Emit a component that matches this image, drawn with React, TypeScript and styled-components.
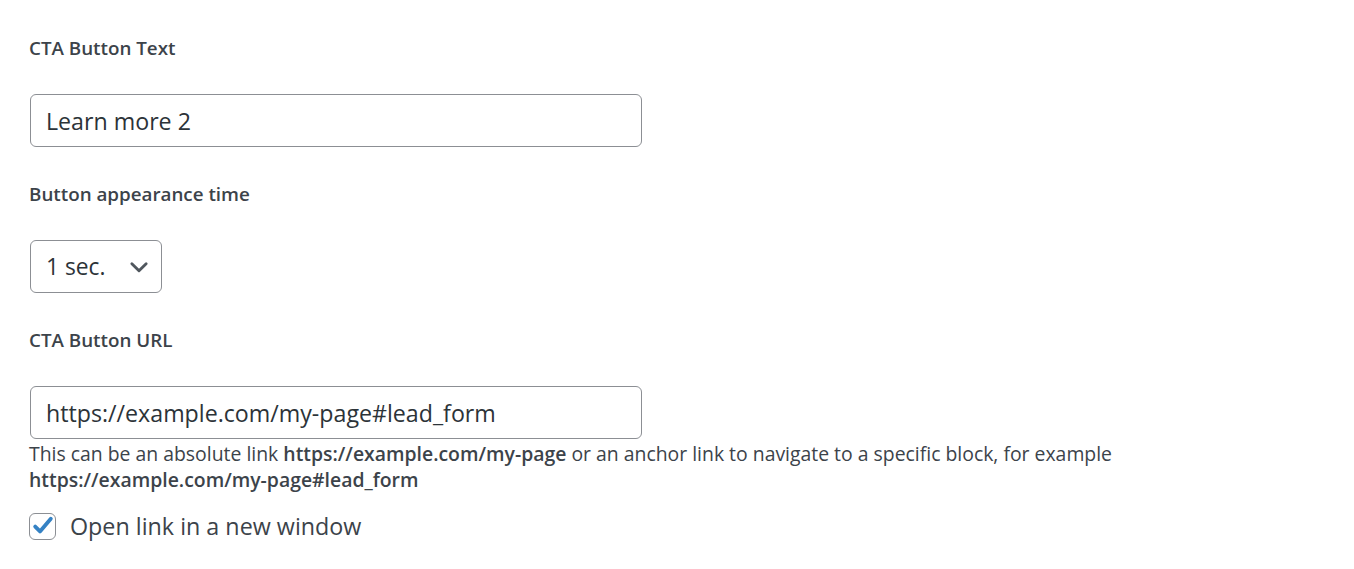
import styled, { createGlobalStyle } from "styled-components";
import { useState } from "react";

const GlobalStyle = createGlobalStyle`
  body {
    margin: 0;
    background: #ffffff;
    font-family: "Open Sans", "Noto Sans", sans-serif;
    color: #3c434a;
  }
`;

const Form = styled.div`
  display: flex;
  flex-direction: column;
  padding: 36px 0 0 29px;
`;

const Field = styled.div`
  display: flex;
  flex-direction: column;
  margin-bottom: 35px;
`;

const Label = styled.label`
  font-size: 18.8px;
  font-weight: 600;
  line-height: 24px;
  color: #3c434a;
  margin-bottom: 34px;
`;

const TextInput = styled.input<{ $h?: number }>`
  box-sizing: border-box;
  width: 612px;
  height: ${(p) => p.$h ?? 53}px;
  margin-left: 1px;
  padding: 0 15px;
  border: 1px solid #8c8f94;
  border-radius: 6px;
  font-family: inherit;
  font-size: 23.2px;
  color: #2c3338;
  background: #fff;
  outline: none;
`;

const SelectBox = styled.div`
  position: relative;
  width: 132px;
  height: 53px;
  margin-left: 1px;
`;

const Select = styled.select`
  box-sizing: border-box;
  width: 100%;
  height: 100%;
  padding: 0 40px 0 15px;
  border: 1px solid #8c8f94;
  border-radius: 6px;
  font-family: inherit;
  font-size: 22.8px;
  color: #2c3338;
  background: #fff;
  appearance: none;
  outline: none;
`;

const Chevron = styled.svg`
  position: absolute;
  right: 12px;
  top: 50%;
  transform: translateY(-50%);
  pointer-events: none;
`;

const Help = styled.p`
  margin: 2px 0 0 0;
  font-size: 19.4px;
  line-height: 26px;
  color: #3c434a;

  strong {
    font-weight: 600;
  }
`;

const CheckRow = styled.label`
  display: flex;
  align-items: center;
  gap: 14px;
  margin-top: 19px;
  font-size: 23.3px;
  line-height: 28px;
  color: #3c434a;
  cursor: pointer;
`;

const CheckBox = styled.span`
  box-sizing: border-box;
  width: 27px;
  height: 27px;
  border: 1px solid #8c8f94;
  border-radius: 6px;
  display: flex;
  align-items: center;
  justify-content: center;
  background: #fff;
`;

const App = () => {
  const [checked, setChecked] = useState(true);

  return (
    <>
      <GlobalStyle />
      <Form>
        <Field>
          <Label>CTA Button Text</Label>
          <TextInput defaultValue="Learn more 2" />
        </Field>
        <Field>
          <Label>Button appearance time</Label>
          <SelectBox>
            <Select defaultValue="1">
              <option value="1">1 sec.</option>
              <option value="2">2 sec.</option>
              <option value="3">3 sec.</option>
              <option value="5">5 sec.</option>
            </Select>
            <Chevron width="22" height="22" viewBox="0 0 20 20">
              <path
                d="M3.5 7l6.5 6.5L16.5 7"
                fill="none"
                stroke="#50575e"
                strokeWidth="2.6"
                strokeLinecap="round"
                strokeLinejoin="round"
              />
            </Chevron>
          </SelectBox>
        </Field>
        <Field>
          <Label>CTA Button URL</Label>
          <TextInput $h={53} defaultValue="https://example.com/my-page#lead_form" />
          <Help>
            This can be an absolute link <strong>https://example.com/my-page</strong> or an
            anchor link to navigate to a specific block, for example
            <br />
            <strong>https://example.com/my-page#lead_form</strong>
          </Help>
          <CheckRow onClick={() => setChecked(!checked)}>
            <CheckBox>
              {checked && (
                <svg width="24" height="24" viewBox="0 0 20 20">
                  <path
                    d="M3.5 10.5l4 4L16.5 4"
                    fill="none"
                    stroke="#3582c4"
                    strokeWidth="3.2"
                    strokeLinecap="round"
                    strokeLinejoin="round"
                  />
                </svg>
              )}
            </CheckBox>
            Open link in a new window
          </CheckRow>
        </Field>
      </Form>
    </>
  );
};

export default App;
